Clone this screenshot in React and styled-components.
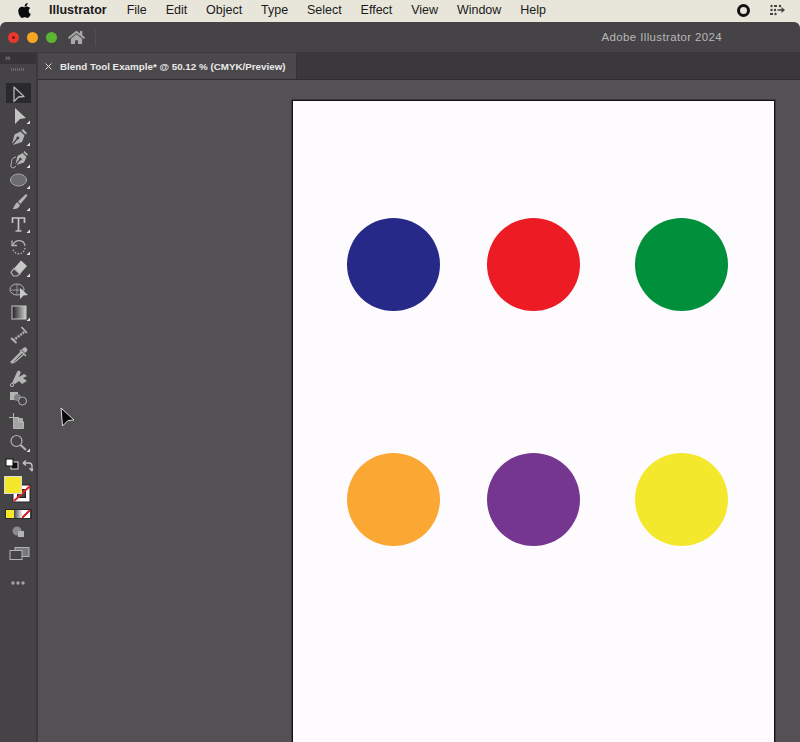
import React from 'react'
import styled, { createGlobalStyle } from 'styled-components'
import { FaApple, FaHome } from 'react-icons/fa'

const Global = createGlobalStyle`
  html, body {
    margin: 0;
    padding: 0;
    background: #e8e5da;
  }
`
const Screen = styled.div`
  position: relative;
  width: 800px;
  height: 742px;
  overflow: hidden;
  display: flex;
  flex-direction: column;
  background: #e8e5da;
  font-family: 'Liberation Sans', Arial, sans-serif;
`
const MenuBar = styled.div`
  height: 22px;
  flex: none;
  display: flex;
  align-items: center;
  padding: 0 15px 2px 17px;
  box-sizing: border-box;
  color: #1a1a1a;
  font-size: 12.5px;
`
const AppleMark = styled(FaApple)`
  width: 15px;
  height: 17px;
  color: #0c0c0c;
  margin-right: 17px;
`
const AppName = styled.span`
  font-weight: bold;
  margin-right: 20px;
`
const MenuItem = styled.span`
  margin-right: 18.85px;
`
const StatusArea = styled.div`
  margin-left: auto;
  display: flex;
  align-items: center;
  gap: 20px;
`
const RecordIcon = styled.span`
  width: 7px;
  height: 7px;
  border: 3px solid #111;
  border-radius: 50%;
  background: #e8e5da;
`
const Win = styled.div`
  flex: 1;
  min-height: 0;
  display: flex;
  flex-direction: column;
  background: #454346;
  border-radius: 6px 6px 0 0;
  overflow: hidden;
`
const TitleBar = styled.div`
  height: 31px;
  flex: none;
  display: flex;
  align-items: center;
  padding-left: 8px;
  padding-right: 78px;
  box-sizing: border-box;
  border-bottom: 1px solid #3a383b;
`
const Light = styled.span`
  width: 11px;
  height: 11px;
  margin-right: 8px;
  border-radius: 50%;
  background: ${p => p.$color};
  display: flex;
  align-items: center;
  justify-content: center;
`
const CloseDot = styled.span`
  width: 3px;
  height: 3px;
  border-radius: 50%;
  background: #7a1a1a;
`
const HomeIcon = styled(FaHome)`
  width: 17px;
  height: 15px;
  margin-left: 3px;
  color: #a9a8a9;
`
const TitleDivider = styled.span`
  width: 1px;
  height: 17px;
  margin-left: 10px;
  background: #514f52;
`
const WinTitle = styled.span`
  margin-left: auto;
  color: #b8b7b8;
  font-size: 11.5px;
  letter-spacing: 0.36px;
`
const Body = styled.div`
  flex: 1;
  min-height: 0;
  display: flex;
`
const Tools = styled.div`
  width: 36px;
  flex: none;
  display: flex;
  flex-direction: column;
  align-items: center;
  background: #454346;
`
const ToolsHead = styled.div`
  align-self: stretch;
  height: 11px;
  padding: 0 0 0 5px;
  background: #363437;
  color: #a5a5a5;
  font-size: 9px;
  line-height: 10px;
  letter-spacing: -0.5px;
`
const Grip = styled.div`
  width: 14px;
  height: 3px;
  margin: 4px 0 11px;
  flex: none;
  background: repeating-linear-gradient(90deg, #6d6b6e 0 1px, transparent 1px 2px);
`
const ToolRow = styled.div`
  height: 21.875px;
  width: 36px;
  flex: none;
  display: flex;
  align-items: center;
  justify-content: center;
`
const ToolIcon = styled.svg`
  width: 30px;
  height: 22px;
  flex: none;
  display: block;
  background: ${p => (p.$active ? 'linear-gradient(#2a292b, #2a292b) 3px 1px / 25px 20px no-repeat' : 'none')};
`
const Defaults = styled.svg`
  width: 30px;
  height: 16px;
  margin-top: 4px;
  flex: none;
`
const ColorStack = styled.svg`
  width: 30px;
  height: 30px;
  margin-top: 2px;
  flex: none;
`
const Modes = styled.div`
  display: flex;
  width: 25px;
  height: 8px;
  margin-top: 3px;
  flex: none;
  border: 1px solid #2b2a2c;
  box-sizing: content-box;
`
const Mode = styled.span`
  flex: 1;
  background: ${p => p.$bg};
`
const SmallTool = styled.svg`
  width: 30px;
  height: ${p => p.$h}px;
  margin-top: ${p => p.$top}px;
  flex: none;
`
const ToolDivider = styled.div`
  width: 2px;
  flex: none;
  background: #3a383b;
`
const Main = styled.div`
  flex: 1;
  min-width: 0;
  display: flex;
  flex-direction: column;
`
const TabBar = styled.div`
  height: 27px;
  flex: none;
  display: flex;
  background: #3a383b;
  box-sizing: border-box;
  border-bottom: 1px solid #2f2d30;
`
const Tab = styled.div`
  width: 259px;
  display: flex;
  align-items: center;
  padding-left: 6px;
  box-sizing: border-box;
  gap: 7px;
  background: #4a484b;
  border-right: 1px solid #343235;
  color: #e9e9e9;
  font-size: 9.8px;
  font-weight: bold;
`
const TabClose = styled.svg`
  width: 9px;
  height: 9px;
  flex: none;
`
const Canvas = styled.div`
  flex: 1;
  min-height: 0;
  padding: 20px 25px 0 254px;
  background: #535154;
  overflow: hidden;
`
const Artboard = styled.div`
  height: 800px;
  box-sizing: border-box;
  padding: 117px 0 0 54px;
  background: #fdfbfe;
  border: 1px solid #111;
  box-shadow: 0 0 0 0.5px #222;
  display: grid;
  grid-template-columns: 140px 148px 93px;
  grid-auto-rows: 93px;
  row-gap: 142px;
`
const Dot = styled.div`
  width: 93px;
  height: 93px;
  border-radius: 50%;
  background: ${p => p.$color};
`
const Cursor = styled.svg`
  position: absolute;
  left: 58px;
  top: 405px;
  width: 20px;
  height: 24px;
`

const G = '#b5b4b5'

const corner = <polygon points="27,20 27,16.5 23.5,20" fill="#e0e0e0" />

const tools = [
  { active: true, d: <path d="M11 5 L21 14.5 L15.5 15 L11 19.5 Z" fill="none" stroke={G} strokeWidth="1.3" strokeLinejoin="round" /> },
  { more: true, d: <path d="M12 4 L23 14 L17 15 L12 20 Z" fill="#c4c3c4" /> },
  { more: true, d: <g fill={G}><path d="M20 3 L24 7 L22.5 8.5 L18.5 4.5 Z" /><path d="M17.5 5.5 L21.5 9.5 L19 16 L10 19 L14.5 13.5 A1.5 1.5 0 1 0 13.4 12.5 L9 18 L11.5 8.5 Z" /></g> },
  { more: true, d: <g><path d="M21.5 3 L25 6.5 L23.8 7.7 L20.3 4.2 Z" fill={G} /><path d="M19.5 5 L23.5 9 L21 14.5 L13.5 17 L17 12.5 A1.4 1.4 0 1 0 16 11.5 L12.5 16 L14.5 8 Z" fill={G} /><path d="M13 9 C7 10 9 15 8 17 C7 20 11 21 13 18" fill="none" stroke={G} strokeWidth="1" /></g> },
  { more: true, d: <ellipse cx="15.5" cy="11" rx="8" ry="6" fill="#6d6c6e" stroke="#a9a8a9" strokeWidth="1" /> },
  { more: true, d: <g fill={G}><path d="M23 3 L24.5 4.5 L17.5 13 L15 10.5 Z" /><path d="M14.3 11.3 L16.8 13.8 C16.5 17 13 18.5 9.5 18 C11.5 16.5 11.5 12.8 14.3 11.3 Z" /></g> },
  { more: true, d: <path d="M9.5 10 V5 H21.5 V10 M15.5 5 V18 M12.5 18 H18.5" fill="none" stroke="#c4c3c4" strokeWidth="1.7" /> },
  { more: true, d: <g fill="none" stroke={G} strokeWidth="1.3"><path d="M10 10 C12 4 21 4 22 11" /><path d="M22 13 C21 21 11 20 10 14" strokeDasharray="1.5 1.5" /><path d="M9 5.5 V10.5 H14" /></g> },
  { more: true, d: <g><path d="M18 3.5 L24 9 L17 17 L11 11.5 Z" fill="#c9c8c9" /><path d="M11 11.5 L17 17 L14 19 L10.5 19 L8 15.5 Z" fill="#454346" stroke={G} strokeWidth="1.2" /></g> },
  { d: <g><ellipse cx="14" cy="10.5" rx="7" ry="5.5" fill="none" stroke={G} strokeWidth="1" /><path d="M8 11 H20 M14 5.5 V15" stroke={G} strokeWidth="0.7" /><path d="M17 9 L25 16 L20.5 16.5 L17 20 Z" fill="#c9c8c9" /></g> },
  { more: true, d: <g><defs><linearGradient id="grad"><stop offset="0" stopColor="#1e1d1f" /><stop offset="1" stopColor="#cfcfcf" /></linearGradient></defs><rect x="9" y="5" width="14" height="13" fill="url(#grad)" stroke="#c4c3c4" strokeWidth="1" /></g> },
  { d: <g stroke={G} fill="none"><path d="M10 17.5 L22 8.5" strokeWidth="2.4" strokeDasharray="2 1" /><path d="M18.5 4 L24 10" strokeWidth="1.7" /><path d="M8 15 L13.5 20" strokeWidth="1.7" /></g> },
  { d: <g><path d="M21 3.5 C23 2.8 25 5 24.2 7 L22 9 L18.5 5.5 Z" fill={G} /><path d="M17 6 L23 12" fill="none" stroke={G} strokeWidth="1.6" /><path d="M19.5 8 L11 16.5 L9 19 L8 18 L10.5 15.5 L18.5 7.5 M21 10 L12 18 L9 19" fill="none" stroke={G} strokeWidth="1.2" /></g> },
  { d: <g fill="none" stroke={G}><path d="M9 17 L14 6 C15 4 18 4.5 17.5 7 L16 11 L21 8 L24 10 L20 12 L24 15 L19 18 L16 15 L12 18 Z" fill={G} stroke="none" /><circle cx="9" cy="19" r="1.6" strokeWidth="1" /></g> },
  { d: <g><rect x="7" y="4" width="8" height="8" fill={G} /><circle cx="14.5" cy="9.5" r="3.5" fill="#828183" /><circle cx="19.5" cy="13" r="4" fill="#454346" stroke={G} strokeWidth="1" /></g> },
  { d: <g fill="none" stroke={G} strokeWidth="1"><path d="M6 7.5 H15.5 L20.5 12 V18.5 H10.5 V3" /><path d="M15.5 7.5 V12 H20.5" /><rect x="11" y="8" width="9" height="10" fill="#c4c3c4" stroke="none" opacity="0.75" /></g> },
  { more: true, d: <g fill="none" stroke={G}><circle cx="13.5" cy="9" r="5.5" strokeWidth="1.2" /><path d="M17.5 13 L23 18" strokeWidth="2" /></g> },
]

const menu = ['File', 'Edit', 'Object', 'Type', 'Select', 'Effect', 'View', 'Window', 'Help']

const dots = ['#262987', '#ec1b24', '#008f3a', '#fba733', '#74368e', '#f4e82c']

const App = () => (
  <Screen>
    <Global />
    <MenuBar>
      <AppleMark />
      <AppName>Illustrator</AppName>
      {menu.map(m => <MenuItem key={m}>{m}</MenuItem>)}
      <StatusArea>
        <RecordIcon />
        <svg width="15" height="12" viewBox="0 0 15 12" style={{ display: 'block' }}>
          <g fill="#444">
            <circle cx="1.5" cy="2" r="1.2" />
            <rect x="4" y="1" width="3" height="2" />
            <circle cx="10" cy="2" r="1.2" />
            <circle cx="1.5" cy="6" r="1.2" />
            <circle cx="5" cy="6" r="1.2" />
            <path d="M7.5 5.2 H11.5 V3 L15 6 L11.5 9 V6.8 H7.5 Z" />
            <rect x="0" y="9" width="3" height="2" />
            <circle cx="5.5" cy="10" r="1.2" />
          </g>
        </svg>
      </StatusArea>
    </MenuBar>
    <Win>
      <TitleBar>
        <Light $color="#e8392f"><CloseDot /></Light>
        <Light $color="#f5a623" />
        <Light $color="#5cb531" />
        <HomeIcon />
        <TitleDivider />
        <WinTitle>Adobe Illustrator 2024</WinTitle>
      </TitleBar>
      <Body>
        <Tools>
          <ToolsHead>››</ToolsHead>
          <Grip />
          {tools.map((t, i) => (
            <ToolRow key={i}>
              <ToolIcon viewBox="0 0 30 22" $active={t.active}>
                {t.d}
                {t.more && corner}
              </ToolIcon>
            </ToolRow>
          ))}
          <Defaults viewBox="0 0 30 16">
            <rect x="8" y="4" width="7" height="7" fill="#111" stroke="#ddd" strokeWidth="1" />
            <rect x="3" y="1" width="7" height="7" fill="#fff" stroke="#111" strokeWidth="1" />
            <path d="M21 5 H26 Q29 5 29 8 V12 M20 5 L23 2.5 M20 5 L23 7.5 M29 13 L26.5 10 M29 13 L31 10" fill="none" stroke="#c4c3c4" strokeWidth="1.3" />
          </Defaults>
          <ColorStack viewBox="0 0 30 30">
            <rect x="10" y="9" width="17" height="17" fill="#fff" stroke="#222" strokeWidth="1" />
            <rect x="14.5" y="13.5" width="8" height="8" fill="#454346" stroke="#222" strokeWidth="1" />
            <path d="M11 25 L27 10" stroke="#e0262c" strokeWidth="2.2" />
            <rect x="1.5" y="0.5" width="17" height="17" fill="#f5e82a" stroke="#dcdcdc" strokeWidth="1" />
          </ColorStack>
          <Modes>
            <Mode $bg="#f5e82a" />
            <Mode $bg="linear-gradient(90deg, #444, #eee)" />
            <Mode $bg="linear-gradient(135deg, #fff 40%, #e0262c 40% 60%, #fff 60%)" />
          </Modes>
          <SmallTool viewBox="0 0 30 12" $h={12} $top={7}>
            <circle cx="14" cy="5" r="4.5" fill="#8a898b" />
            <rect x="15" y="5" width="6" height="6" fill="#b5b4b5" />
          </SmallTool>
          <SmallTool viewBox="0 0 30 13" $h={13} $top={9}>
            <rect x="12" y="0.5" width="14" height="9" fill="#7a797b" stroke="#b5b4b5" />
            <rect x="7" y="3.5" width="12" height="9" fill="#454346" stroke="#b5b4b5" />
          </SmallTool>
          <SmallTool viewBox="0 0 30 4" $h={4} $top={21}>
            <circle cx="10" cy="2" r="1.7" fill="#a5a4a5" />
            <circle cx="15" cy="2" r="1.7" fill="#a5a4a5" />
            <circle cx="20" cy="2" r="1.7" fill="#a5a4a5" />
          </SmallTool>
        </Tools>
        <ToolDivider />
        <Main>
          <TabBar>
            <Tab>
              <TabClose viewBox="0 0 9 9">
                <path d="M1.5 1.5 L7.5 7.5 M7.5 1.5 L1.5 7.5" stroke="#d8d8d8" strokeWidth="1" />
              </TabClose>
              Blend Tool Example* @ 50.12 % (CMYK/Preview)
            </Tab>
          </TabBar>
          <Canvas>
            <Artboard>
              {dots.map(c => <Dot key={c} $color={c} />)}
            </Artboard>
          </Canvas>
        </Main>
      </Body>
    </Win>
    <Cursor viewBox="0 0 20 24">
      <path d="M3 3 L16 15 L10 15.5 L4.5 21 Z" fill="#0a0a0a" stroke="#ddd" strokeWidth="1" />
    </Cursor>
  </Screen>
)

export default App
